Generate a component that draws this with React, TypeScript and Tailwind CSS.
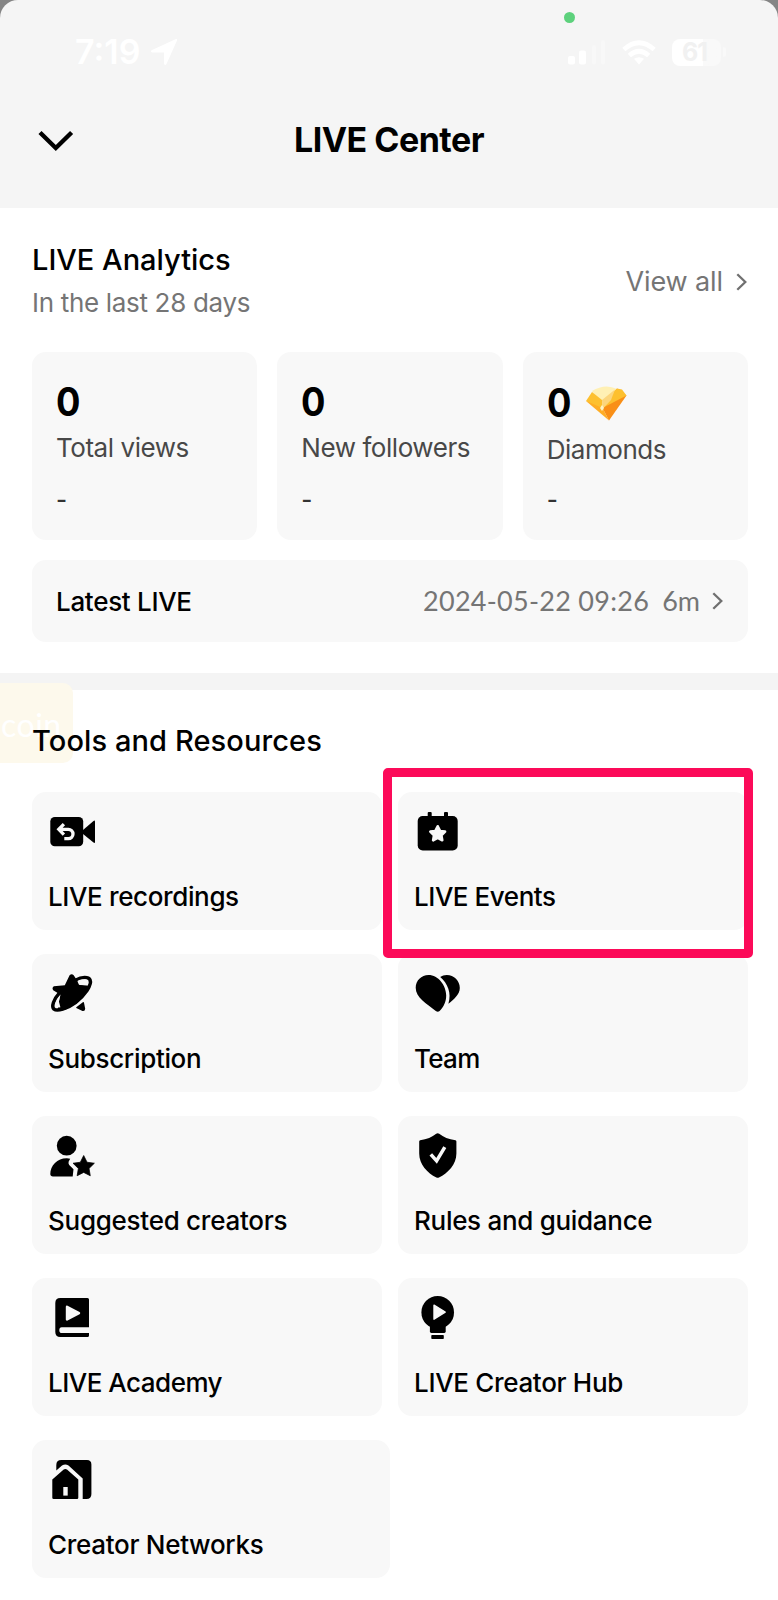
import type { ReactNode } from "react";

const STAR =
  "M0 -9 L2.7 -3.6 L8.6 -2.8 L4.3 1.4 L5.3 7.3 L0 4.6 L-5.3 7.3 L-4.3 1.4 L-8.6 -2.8 L-2.7 -3.6 Z";

function Icon({ children }: { children: ReactNode }) {
  return (
    <svg viewBox="0 0 48 48" className="block size-12 shrink-0 overflow-visible" fill="#000">
      {children}
    </svg>
  );
}

const RecordingIcon = (
  <Icon>
    <rect x="2.3" y="9" width="32.9" height="29.3" rx="4.5" />
    <path d="M35 22 L45.5 12.9 Q47 12 47 13.6 V34 Q47 35.5 45.5 34.5 L35 26 Z" />
    <path d="M11 21.3 H20.3 A4.7 4.7 0 0 1 20.3 30.7 H16.3 M15.9 16.2 L10.8 21.3 L15.9 26.6" fill="none" stroke="#f8f8f8" strokeWidth="3.3" strokeLinejoin="miter" />
  </Icon>
);

const EventsIcon = (
  <Icon>
    <rect x="3.7" y="8" width="40" height="34.4" rx="5" />
    <rect x="13.7" y="4" width="4" height="7" rx="1" />
    <rect x="30" y="4" width="4" height="7" rx="1" />
    <path d={STAR} transform="translate(23.7 26) scale(.86)" fill="#f8f8f8" stroke="#f8f8f8" strokeWidth="3" strokeLinejoin="round" />
  </Icon>
);

const SubscriptionIcon = (
  <Icon>
    <path d="M21.6 5.2 Q23.7 3.2 25.7 5.2 L28.8 10 L31 14.8 L40 15.5 L39.8 19 C36 26 27 35 18 39.5 L9.5 41 L10.6 33 L12.5 24.8 L5.2 20.2 Q3.6 18 5.8 16.3 L16.8 15.3 Z" />
    <path d="M27.5 10.2 C34 6.5 40.5 6.8 42 9.8 C44.3 15 36.5 25.5 27.5 32.5 C19 38.8 9.2 41.6 6 39.2 C3.2 36.7 5.5 29.5 11.7 22.6" fill="none" stroke="#000" strokeWidth="3.5" strokeLinecap="round" />
    <path d="M29.7 10.7 C34.5 8.9 38.5 8.8 39.7 10.8 Q40.7 12.4 39.8 15.3 L31.6 15.1 Z" fill="#f8f8f8" />
    <path d="M11.8 25.7 L10.9 31.5 L12.4 37.2 Q9 38.2 7.7 36.8 C6.4 34.8 8 30.3 11.8 25.7 Z" fill="#f8f8f8" />
    <path d="M34.8 32.3 Q35.8 31.6 36 32.8 L37.2 38.7 Q37 41.6 34.5 41 L28.3 38 Q27.8 37.4 28.6 37 Z" />
  </Icon>
);

const TeamIcon = (
  <Icon>
    <path d="M1.7 17.8 C1.7 10.5 7.4 5 14.5 5 C24.2 5 32.2 15.5 32.2 25.5 C32.2 31.5 29.7 37 25.6 41 Q23.8 42.6 21.8 41 C12.5 33.5 1.7 27.8 1.7 17.8 Z" />
    <path d="M26.2 7.1 C28 5.7 30.2 5 32.8 5 C40 5 45.8 10.8 45.8 18 C45.8 24.5 39.5 29.7 34.4 33.8 C37.8 23 33.6 13.5 26.2 7.1 Z" />
  </Icon>
);

const SuggestedIcon = (
  <Icon>
    <circle cx="18.7" cy="13.7" r="9.9" />
    <path d="M22.2 26.8 L20.6 29.8 Q20.2 31.5 21.2 33 L25.5 37.3 L24.7 44.4 H5 Q2.3 44.4 2.3 42 C2.3 33.5 9.5 26 19 26.2 Z" />
    <path d={STAR} transform="translate(35.7 34.7) scale(1.24)" stroke="#000" strokeWidth=".6" strokeLinejoin="round" />
  </Icon>
);

const RulesIcon = (
  <Icon>
    <path d="M22.2 1.8 Q23.7 .6 25.2 1.8 C29.5 5 34.5 7.5 41.5 8.2 Q42.4 8.5 42.4 9.6 V21.5 C42.4 32.5 34 41 25 45.5 Q23.7 46.2 22.4 45.5 C13.4 41 5.2 32.5 5.2 21.5 V9.6 Q5.2 8.5 6.1 8.2 C13 7.5 18 5 22.2 1.8 Z" />
    <path d="M16.8 22.4 L22.6 28.9 L30.8 15.2" fill="none" stroke="#f8f8f8" strokeWidth="3.5" />
  </Icon>
);

const AcademyIcon = (
  <Icon>
    <path d="M12.3 4 H39.5 Q41 4 41 5.5 V33.3 H13.7 Q11.3 33.3 11.3 36.2 Q11.3 39 13.7 39 H41 V41.5 Q41 43 39.5 43 H12.3 Q7.3 43 7.3 38 V9 Q7.3 4 12.3 4 Z" />
    <path d="M19 12.8 L31 19.1 L19 25.5 Z" fill="#f8f8f8" stroke="#f8f8f8" strokeWidth="2.4" strokeLinejoin="round" />
  </Icon>
);

const HubIcon = (
  <Icon>
    <circle cx="23.7" cy="18.4" r="16.3" />
    <path d="M15.9 30 H31.7 V37.6 Q31.7 39 30.3 39 H17.3 Q15.9 39 15.9 37.6 Z" />
    <rect x="17.3" y="41" width="12.5" height="4" rx=".8" />
    <path d="M20 11.2 L31.2 18.1 L20 25.2 Z" fill="#f8f8f8" stroke="#f8f8f8" strokeWidth="1.4" strokeLinejoin="round" />
  </Icon>
);

const NetworksIcon = (
  <Icon>
    <path d="M8.3 14.5 V9 Q8.3 4 13.3 4 H39 Q43.4 4 43.4 8.5 V38 Q43.4 43 38.4 43 H34.7 V22.5 L20.5 9.5 Q17.3 7.6 14 9.5 Z" />
    <path d="M15.7 13.6 Q17.3 12.2 19 13.6 L30.3 23.4 V41.7 Q30.3 43 29 43 H5.7 Q4.3 43 4.3 41.7 V23.4 Z" />
    <rect x="15.3" y="31" width="4.4" height="8.6" fill="#f8f8f8" />
  </Icon>
);

const tools: { label: string; icon: ReactNode; track: string }[] = [
  { label: "LIVE recordings", icon: RecordingIcon, track: "tracking-[-0.37px]" },
  { label: "LIVE Events", icon: EventsIcon, track: "tracking-[-0.45px]" },
  { label: "Subscription", icon: SubscriptionIcon, track: "tracking-[-0.33px]" },
  { label: "Team", icon: TeamIcon, track: "tracking-[-0.7px]" },
  { label: "Suggested creators", icon: SuggestedIcon, track: "tracking-[-0.27px]" },
  { label: "Rules and guidance", icon: RulesIcon, track: "tracking-[-0.3px]" },
  { label: "LIVE Academy", icon: AcademyIcon, track: "tracking-[-0.5px]" },
  { label: "LIVE Creator Hub", icon: HubIcon, track: "tracking-[-0.32px]" },
];

function Tile({ label, icon, track }: { label: string; icon: ReactNode; track: string }) {
  return (
    <div className="flex h-[138px] flex-col rounded-[14px] bg-[#f8f8f8] px-4 pt-4">
      {icon}
      <span className={`mt-[25px] text-[26px] leading-8 font-medium whitespace-nowrap ${track}`}>{label}</span>
    </div>
  );
}

function Chevron({ className }: { className: string }) {
  return (
    <svg viewBox="0 0 11 18" className={className} fill="none" stroke="#707070" strokeWidth="2.3">
      <path d="M1.3 1.2 L9.3 9 L1.3 16.8" />
    </svg>
  );
}

function Diamond() {
  return (
    <svg viewBox="0 0 42 35" className="h-[35px] w-[42px]">
      <path d="M7 5 Q20 -3 32 3 L23 15 L17 20 Z" fill="#fff0b4" />
      <path d="M7 6 L17 14 L17.5 25 L1 15 Z" fill="#fdc02f" />
      <path d="M1 15 L17.5 22 L24 34.5 Z" fill="#ffad25" />
      <path d="M32 2.5 L41.5 9.5 L24 34.5 L17.5 22 Z" fill="#f98f17" />
      <path d="M32 2.5 L37 3.5 L41.5 9.5 L17.5 22 L20 14 Z" fill="#fdc02f" />
      <path d="M17 14 L30 3.5 L26 14 L17.5 23 Z" fill="#fcd57c" />
      <path d="M17 19 L19 22 L17 25 L15 22 Z" fill="#fff4c4" />
    </svg>
  );
}

function Stat({ label, diamond }: { label: string; diamond?: boolean }) {
  return (
    <div className="flex h-[188px] flex-col rounded-[14px] bg-[#f8f8f8] px-6">
      <div className={`flex h-10 items-center ${diamond ? "mt-[31px]" : "mt-[30px]"}`}>
        <span className="w-[38px] origin-left scale-x-[0.93] text-[39px] leading-10 font-bold">0</span>
        {diamond && <Diamond />}
      </div>
      <span
        className={`${diamond ? "mt-[9px]" : "mt-2"} text-[26px] leading-9 tracking-[-0.45px] whitespace-nowrap text-[#484848]`}
      >
        {label}
      </span>
      <span className={`${diamond ? "mt-[14px]" : "mt-4"} text-[24px] leading-9 font-medium text-[#333]`}>-</span>
    </div>
  );
}

function StatusBar() {
  return (
    <div className="flex h-[104px] items-center justify-between pr-[52px] pl-[75px] text-white">
      <div className="flex items-center gap-2.5">
        <span className="text-[34px] leading-10 font-semibold">7:19</span>
        <svg viewBox="0 0 28 28" className="size-7" fill="#fff">
          <path d="M26 1 Q27.5 .7 27 2.5 L16.5 26 Q15 28.5 14 25.5 V14.5 H2.5 Q-.5 13.5 2 12 Z" />
        </svg>
      </div>
      <div className="flex items-center gap-4">
        <svg viewBox="0 0 38 26" className="h-[26px] w-[38px]" fill="#fff">
          <rect y="17" width="7" height="8.500" rx="2" />
          <rect x="11" y="11.500" width="7" height="14" rx="2" />
          <rect x="24" y="6" width="4" height="19.500" rx="2" opacity=".3" />
          <rect x="33" y="1" width="4" height="24.500" rx="2" opacity=".3" />
        </svg>
        <svg viewBox="0 0 34 25" className="h-[25px] w-[34px]" fill="none" stroke="#fff" strokeWidth="4.600">
          <path d="M1.800 9.500 Q17 -4 32.200 9.500" />
          <path d="M7.300 15.500 Q17 7 26.700 15.500" />
          <path d="M12 18.800 Q17 15.500 22 18.800 L17 24.500 Z" fill="#fff" stroke="none" />
        </svg>
        <div className="flex items-center gap-0.5">
          <div className="flex h-[27px] w-[49px] items-center rounded-lg bg-linear-to-r from-white from-64% to-[#f9f9f9] to-64%">
            <span className="pl-2.5 text-[25px] leading-[27px] font-bold tracking-[-1px] text-[#f1f1f1]">61</span>
          </div>
          <div className="h-2.5 w-[3px] rounded-r-full bg-[#f9f9f9]" />
        </div>
      </div>
    </div>
  );
}

export default function App() {
  return (
    <div className="relative h-[1600px] w-[778px] overflow-hidden bg-[#858585] font-['Inter',sans-serif] text-black">
      <header className="relative h-[208px] rounded-t-[18px] bg-[#f5f5f5]">
        <div className="absolute top-[12px] left-[564px] h-[11px] w-[11px] rounded-full bg-[#5dd17c]" />
        <StatusBar />
        <div className="grid h-[72px] grid-cols-[1fr_auto_1fr] items-center px-[38px]">
          <svg viewBox="0 0 36 22" className="mt-px h-[22px] w-9" fill="none" stroke="#000" strokeWidth="4.400">
            <path d="M2 2.500 L17.800 18 L33.600 2.500" />
          </svg>
          <h1 className="text-[34px] leading-10 font-bold tracking-[-0.5px]">LIVE Center</h1>
        </div>
      </header>

      <section className="h-[465px] bg-white pt-[34px] pr-[30px] pl-8">
        <div className="flex items-center justify-between">
          <div>
            <h2 className="text-[29px] leading-9 font-medium">LIVE Analytics</h2>
            <p className="mt-[7px] text-[26px] leading-9 tracking-[-0.32px] text-[#757575]">In the last 28 days</p>
          </div>
          <div className="flex items-center gap-[13px] pr-px text-[27px] leading-9 tracking-[-0.1px] text-[#757575]">
            View all
            <Chevron className="h-[18px] w-[11px]" />
          </div>
        </div>
        <div className="mt-[31px] grid grid-cols-3 gap-5">
          <Stat label="Total views" />
          <Stat label="New followers" />
          <Stat label="Diamonds" diamond />
        </div>
        <div className="mt-5 flex h-[82px] items-center justify-between rounded-[14px] bg-[#f8f8f8] px-6 text-[26px]">
          <span className="font-medium tracking-[-0.3px]">Latest LIVE</span>
          <span className="flex items-center font-['Lato',sans-serif] text-[27px] text-[#757575]">
            <span className="tracking-[0.28px]">2024-05-22 09:26</span>
            <span className="mr-3 ml-[13px]">6m</span>
            <Chevron className="mr-px h-[18px] w-[11px]" />
          </span>
        </div>
      </section>

      <div className="h-[17px] bg-[#f4f4f4]" />

      <section className="relative h-[910px] bg-white pt-[33px] pr-[30px] pl-8">
        <div className="absolute top-[-7px] left-0 h-20 w-[73px] rounded-r-[10px] bg-[#fdf9ec] pt-[18px] pl-px font-['Lato',sans-serif] text-[32px] tracking-[0.5px] text-white">
          coin
        </div>
        <h2 className="relative text-[29px] leading-9 font-medium tracking-[0.1px]">Tools and Resources</h2>
        <div className="mt-[33px] grid grid-cols-2 gap-x-4 gap-y-6">
          {tools.map((t) => (
            <Tile key={t.label} {...t} />
          ))}
        </div>
        <div className="mt-6 w-[358px]">
          <Tile label="Creator Networks" icon={NetworksIcon} track="tracking-[-0.3px]" />
        </div>
        <div className="absolute top-[78px] left-[383px] h-[190px] w-[370px] rounded-[5px] border-[9.500px] border-[#fc0a59]" />
      </section>
    </div>
  );
}
